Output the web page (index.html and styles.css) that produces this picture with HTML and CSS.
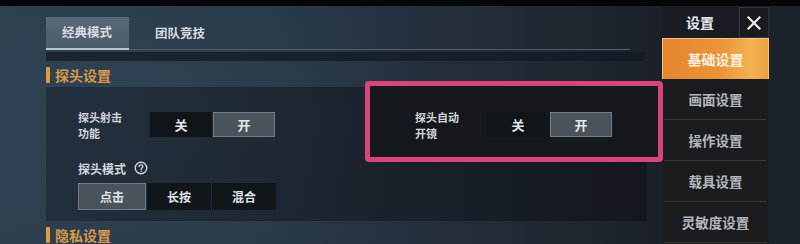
FILE: index.html
```html
<!DOCTYPE html>
<html lang="zh-CN">
<head>
<meta charset="utf-8">
<link rel="stylesheet" href="styles.css">
</head>
<body>
<div class="topbar"></div>
<div class="screen">
  <main class="content">
    <nav class="tabs">
      <div class="tab active">经典模式</div>
      <div class="tab">团队竞技</div>
    </nav>
    <div class="tabband"></div>
    <h2 class="sec">探头设置</h2>
    <section class="panel">
      <div class="col">
        <div class="row">
          <div class="label"><span>探头射击</span><span>功能</span></div>
          <div class="seg">
            <div class="cell">关</div>
            <div class="cell on">开</div>
          </div>
        </div>
        <div class="label2">探头模式
          <svg class="help" width="14" height="14" viewBox="0 0 14 14">
            <circle cx="7" cy="7" r="5.8" fill="none" stroke="#cfd3d7" stroke-width="1.4"/>
            <path d="M5.1 5.6 C5.1 4.4 6 3.8 7 3.8 C8.1 3.8 8.9 4.5 8.9 5.4 C8.9 6.5 7.4 6.7 7.2 7.7 L7.2 8.4" fill="none" stroke="#cfd3d7" stroke-width="1.3" stroke-linecap="round"/>
            <circle cx="7.2" cy="10.2" r="0.8" fill="#cfd3d7"/>
          </svg>
        </div>
        <div class="btns">
          <div class="btn on w1">点击</div>
          <div class="btn">长按</div>
          <div class="btn">混合</div>
        </div>
      </div>
      <div class="highlight">
        <div class="row">
          <div class="label"><span>探头自动</span><span>开镜</span></div>
          <div class="seg">
            <div class="cell">关</div>
            <div class="cell on">开</div>
          </div>
        </div>
      </div>
    </section>
    <h2 class="sec">隐私设置</h2>
  </main>
  <aside class="side">
    <div class="side-head">
      <div class="side-title">设置</div>
      <div class="close">
        <svg width="16" height="16" viewBox="0 0 16 16"><path d="M2.5 2.5 L13.5 13.5 M13.5 2.5 L2.5 13.5" stroke="#e8ecef" stroke-width="2.2" stroke-linecap="square"/></svg>
      </div>
    </div>
    <div class="item active">基础设置</div>
    <div class="item">画面设置</div>
    <div class="item">操作设置</div>
    <div class="item">载具设置</div>
    <div class="item">灵敏度设置</div>
  </aside>
</div>
</body>
</html>
```
FILE: styles.css
```css
* { box-sizing: border-box; margin: 0; padding: 0; }
html, body { width: 800px; height: 244px; overflow: hidden; }
body {
  font-family: "Noto Sans CJK SC", "Noto Sans", sans-serif;
  font-weight: 700;
  color: #d4d8dc;
  background:
    radial-gradient(ellipse 420px 260px at 120px 120px, rgba(60,85,105,0.35), rgba(0,0,0,0) 70%),
    linear-gradient(90deg, #2b3d4d 0%, #283746 35%, #222c37 62%, #1c2129 82%, #1d232b 100%);
}
.topbar { height: 6px; background: #050607; }
.screen { display: flex; height: 238px; }
.content { width: 663px; padding-left: 46px; flex: none; }
.tabs {
  margin-top: 11px;
  width: 584px;
  display: flex;
  border-bottom: 1px solid #4d5d6b;
}
.tab {
  height: 32px;
  font-size: 12.5px;
  line-height: 32px;
  color: #d6dce0;
  padding: 0 16px;
}
.tab.active {
  width: 83px;
  background: linear-gradient(180deg, #58697a, #4b5b69);
  border-bottom: 2px solid #b9c6cf;
  line-height: 30px;
  margin-bottom: -1px;
  height: 33px;
  padding-left: 16px;
}
.tab + .tab { padding-left: 26px; }
.tabband {
  margin-top: 2px;
  width: 599px;
  height: 9px;
  background: rgba(18, 24, 31, 0.7);
}
.sec {
  margin-top: 6px;
  height: 16px;
  display: flex;
  align-items: center;
  gap: 5px;
  font-size: 14px;
  color: #d99a4c;
  line-height: 16px;
}
.sec::before {
  content: "";
  width: 4px;
  height: 16px;
  background: #e49a3a;
  border-radius: 1px;
}
.panel {
  position: relative;
  margin-top: 4px;
  width: 601px;
  height: 134px;
  background: linear-gradient(90deg, rgba(18,26,34,0.45) 0%, rgba(16,20,26,0.55) 60%, rgba(14,16,20,0.6) 100%);
  margin-bottom: 6px;
}
.col { padding: 20px 0 0 32px; }
.row { display: flex; align-items: center; }
.label {
  width: 72px;
  font-size: 11px;
  line-height: 16px;
  color: #d2d6da;
  padding-top: 2px;
  display: flex;
  flex-direction: column;
}
.seg { display: flex; gap: 1px; }
.cell {
  width: 62px;
  height: 25px;
  line-height: 25px;
  text-align: center;
  font-size: 13px;
  background: #10151a;
  color: #e4e7ea;
}
.cell.on, .btn.on {
  background: #4a525a;
  border: 1px solid #737b83;
  line-height: 23px;
}
.label2 {
  margin-top: 19px;
  height: 16px;
  display: flex;
  align-items: center;
  gap: 8px;
  font-size: 12px;
  color: #d2d6da;
}
.help { display: block; }
.btns { margin-top: 7px; display: flex; gap: 1px; }
.btn {
  width: 64px;
  height: 27px;
  line-height: 27px;
  text-align: center;
  font-size: 12px;
  background: #11161b;
  color: #e2e5e8;
}
.btn.w1 { width: 68px; line-height: 25px; }
.highlight {
  position: absolute;
  left: 319px;
  top: -6px;
  width: 298px;
  height: 81px;
  border: 5px solid #d8447d;
  border-radius: 4px;
  background: #15181d;
  padding: 21px 0 0 45px;
}
.side { width: 107px; flex: none; margin-left: -1px; background: #1a1c20; }
.side-head { display: flex; height: 31px; margin-top: 1px; background: #1c2026; }
.side-title {
  width: 76px;
  text-align: center;
  line-height: 30px;
  font-size: 14px;
  color: #e6e9ec;
  background: #191d23;
}
.close {
  width: 30px;
  margin-left: 1px;
  display: flex;
  align-items: center;
  justify-content: center;
  background: #181b20;
  border: 1px solid #30353c;
}
.item {
  height: 41px;
  margin: 0 2px 0 2px;
  border-bottom: 1px solid #34373c;
  text-align: center;
  line-height: 40px;
  font-size: 13.5px;
  color: #b5b9bd;
}
.item.active {
  margin: 0;
  height: 41px;
  color: #fbf1e2;
  font-size: 14px;
  border: 1px solid #f6c27a;
  border-bottom: none;
  background: linear-gradient(90deg, #e5862e 0%, #eb9438 55%, #f3b250 85%, #eea040 100%);
}
```
